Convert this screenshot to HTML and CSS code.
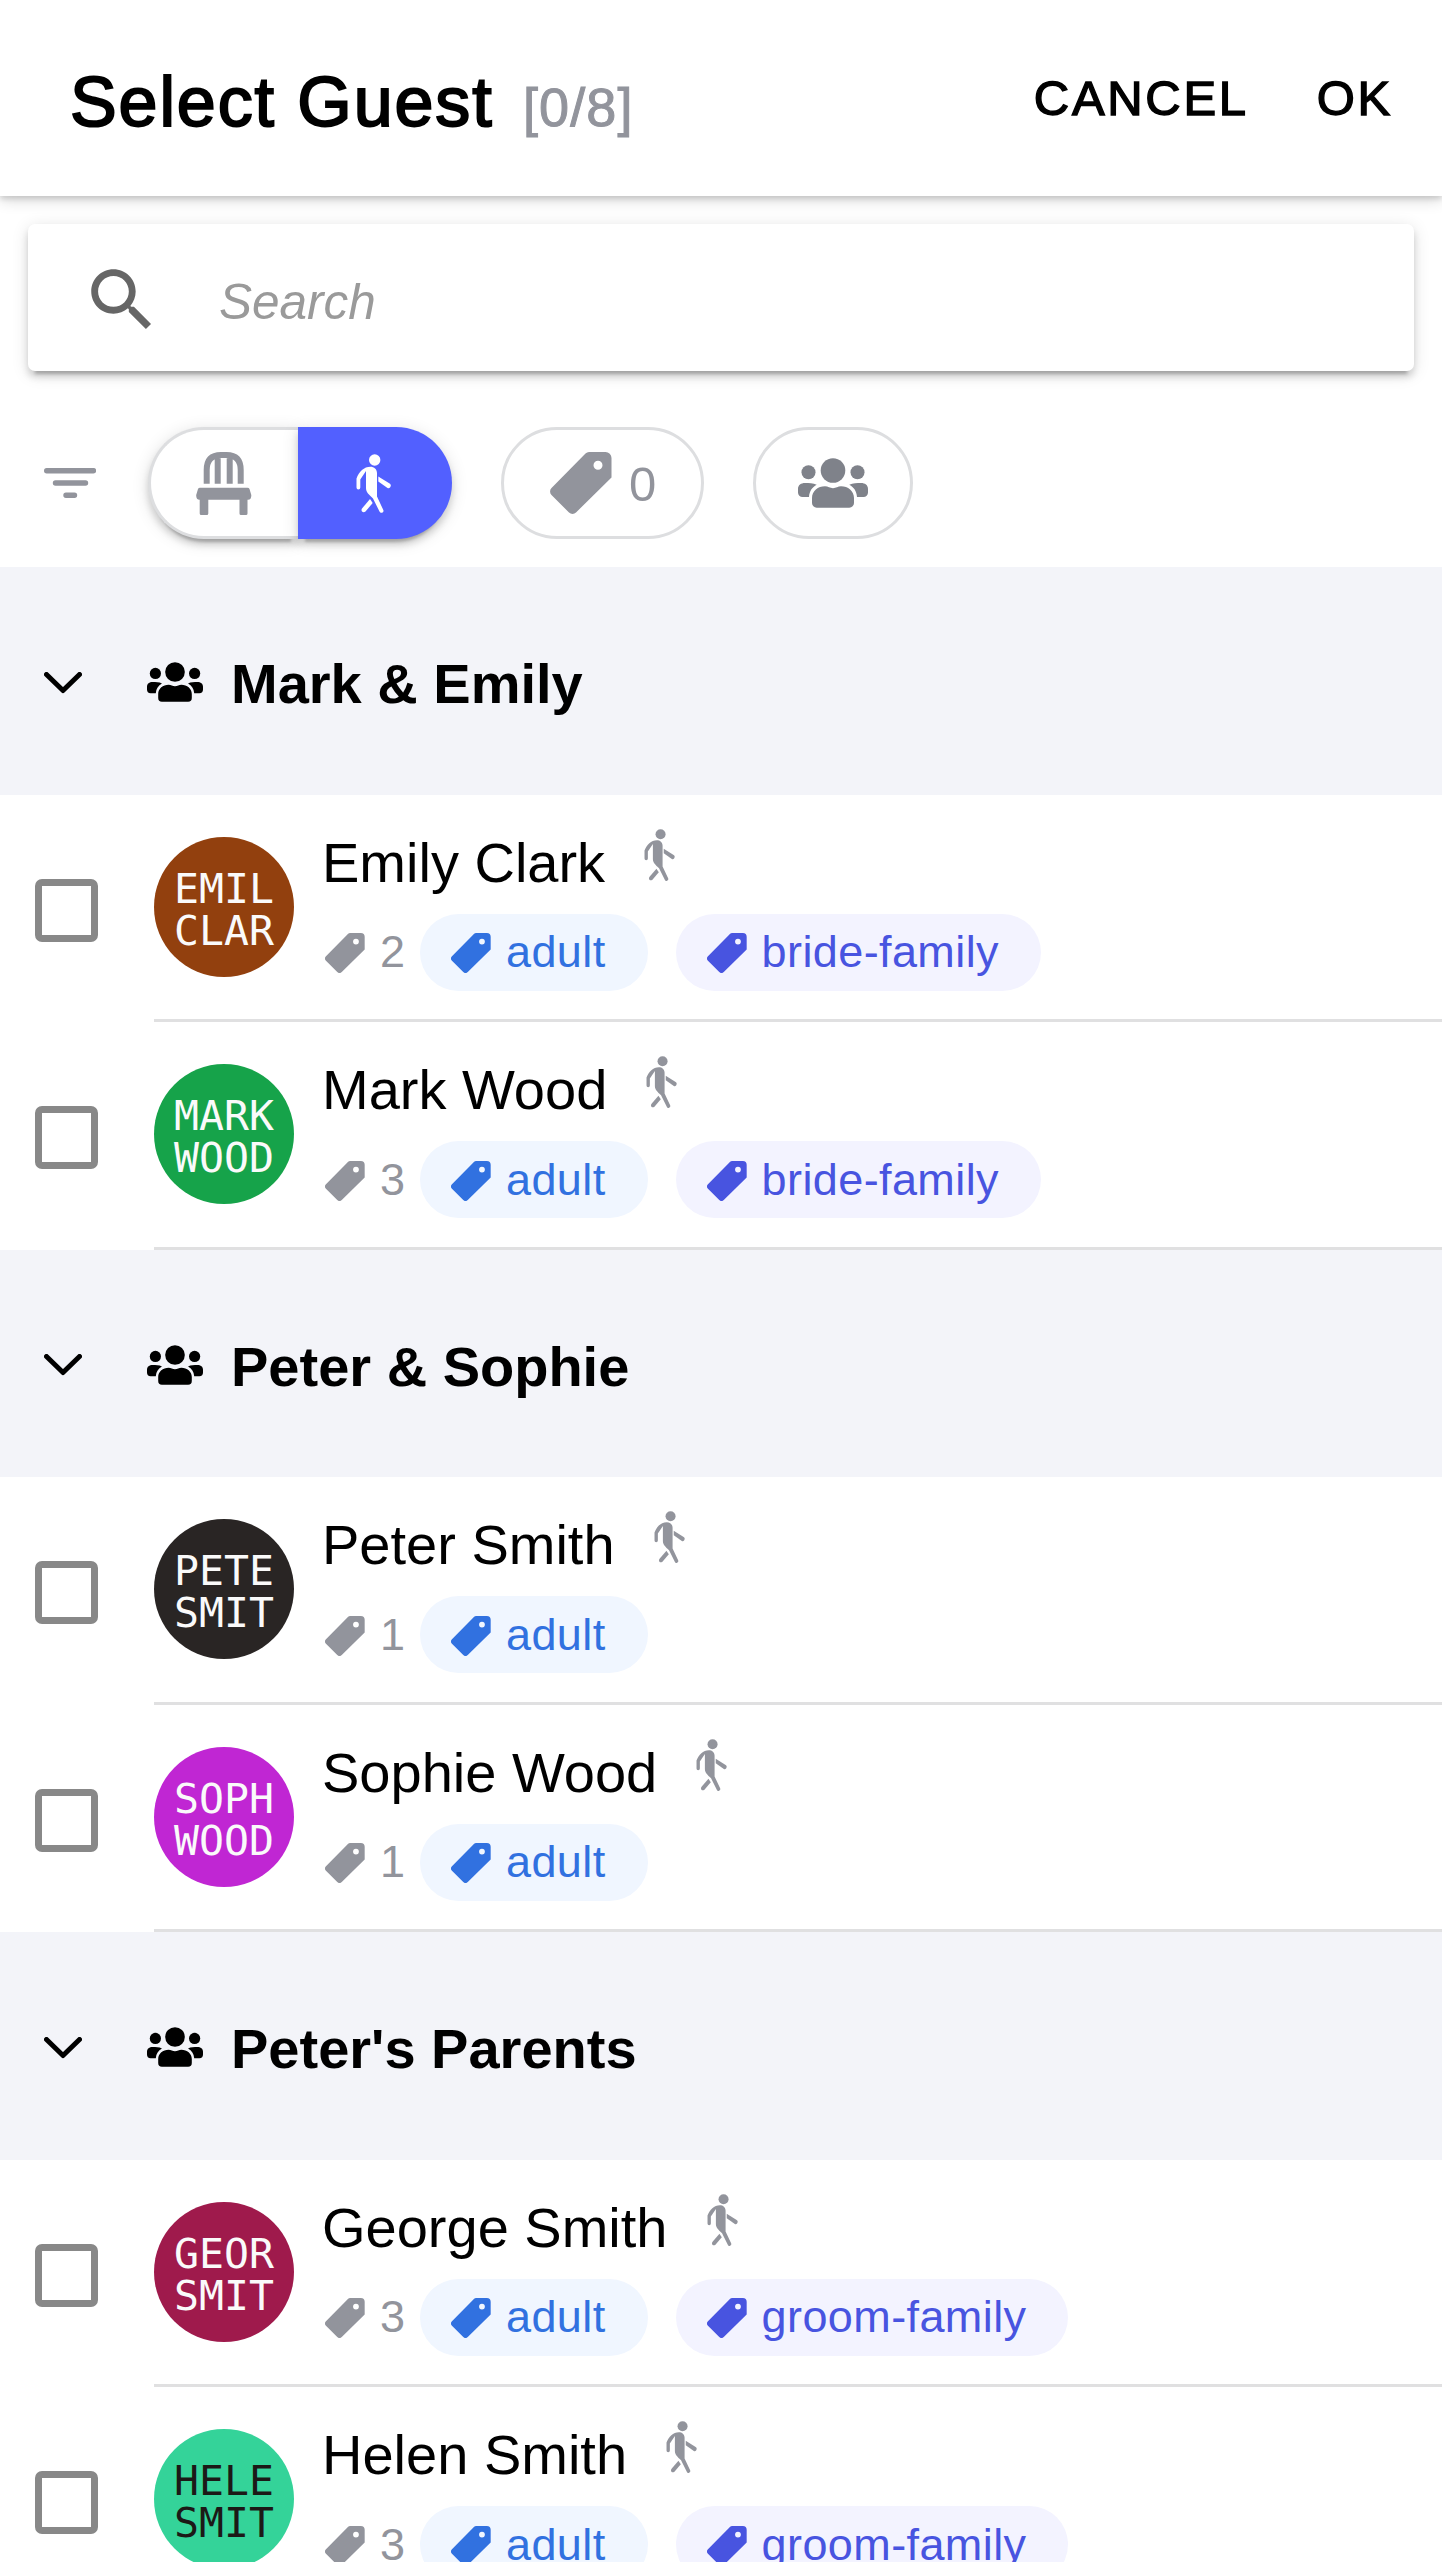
FILE: index.html
```html
<!DOCTYPE html>
<html lang="en">
<head>
    <meta charset="UTF-8">
    <meta name="viewport" content="width=device-width, initial-scale=1.0">
    <title>Select Guest</title>
    <link rel="stylesheet" href="styles.css">
</head>
<body>
    <!-- Shared icons -->
    <svg class="sprite" width="0" height="0">
        <symbol id="walk" viewBox="0 0 35 59">
            <circle cx="18.7" cy="6" r="5.7"/>
            <path d="M10 17V34C10 38.500 13 40.500 17 44.500L23.500 57.500A2 2 0 0 0 27.300 56L21 42.500V19C21 15 18 12.700 14.500 12.700C8 12.700 3 17.500 .5 24.500V33.500A1.900 1.900 0 0 0 4.300 33.500V25.500Z"/>
            <path d="M22.300 22.500L34 29.800Q35.500 31.500 34 33.500Q33 34.700 31.500 34L22.300 27.500Z"/>
            <path d="M14 45L16.700 49L9.500 57.500Q7.500 59 6 57.500Q5 56 6 54.500Z"/>
        </symbol>
        <symbol id="people" viewBox="0 0 70 50">
            <circle cx="35" cy="12.500" r="12.300"/>
            <circle cx="10.500" cy="14.300" r="7"/>
            <circle cx="59.500" cy="14.300" r="7"/>
            <path d="M14 45V40C14 33 20 28.300 27 28.300C30 28.300 32 30.200 35 30.200S40 28.300 43 28.300C50 28.300 56 33 56 40V45A4.700 4.700 0 0 1 51.300 49.700H18.700A4.700 4.700 0 0 1 14 45Z"/>
            <path d="M0 34.500V31C0 27 3 25 7 25C11 25 15 25 18.700 26.800C14 29.500 11.500 33 11 39H4.500A4.500 4.500 0 0 1 0 34.500Z"/>
            <path d="M70 34.500V31C70 27 67 25 63 25C59 25 55 25 51.300 26.800C56 29.500 58.500 33 59 39H65.500A4.500 4.500 0 0 0 70 34.500Z"/>
        </symbol>
        <symbol id="tag" viewBox="0 0 62 62">
            <path fill-rule="evenodd" d="M39 0H55.500A6 6 0 0 1 61.500 6V25.500L26 60.500A5 5 0 0 1 19 60.500L1.500 43A5 5 0 0 1 1.500 36L35.500 1.500Q37 0 39 0ZM48 8.800A4.500 4.500 0 1 0 48 17.800A4.500 4.500 0 1 0 48 8.800Z"/>
        </symbol>
        <symbol id="chevron" viewBox="0 0 38 22">
            <path d="M2.500 2.500L19 18.500L35.500 2.500" fill="none" stroke="currentColor" stroke-width="5" stroke-linecap="round" stroke-linejoin="round"/>
        </symbol>
    </svg>

    <header class="toolbar">
        <h1>Select Guest</h1>
        <span class="counter">[0/8]</span>
        <div class="actions">
            <span class="cancel">CANCEL</span>
            <span class="ok">OK</span>
        </div>
    </header>

    <div class="searchbar">
        <svg viewBox="0 0 24 24"><path d="M15.5 14h-.79l-.28-.27C15.410 12.590 16 11.110 16 9.500 16 5.910 13.090 3 9.500 3S3 5.910 3 9.500 5.910 16 9.500 16c1.610 0 3.090-.59 4.230-1.570l.27.28v.79l5 4.990L20.490 19l-4.990-5zm-6 0C7.010 14 5 11.990 5 9.500S7.010 5 9.500 5 14 7.010 14 9.500 11.990 14 9.500 14z"/></svg>
        <span>Search</span>
    </div>

    <!-- Filters -->
    <div class="filters">
        <svg class="filter-icon" viewBox="0 0 52 30">
            <path d="M2.700 2.700H49.500M11.500 15H41.500M22 27.200H30.500" fill="none" stroke="currentColor" stroke-width="5.400" stroke-linecap="round"/>
        </svg>
        <div class="segment">
            <div class="seg-chair">
                <svg viewBox="0 0 56 63">
                    <path d="M10.700 31.700V18Q10.700 3 25 3H30.500Q44.700 3 44.700 18V31.700M21.700 3V31.700M33.700 3V31.700" fill="none" stroke="currentColor" stroke-width="6"/>
                    <path d="M4 35.700H51.500Q53 35.700 53.500 37L55.300 43Q55.500 47.700 52 47.700H51.500V61.500Q51.500 63 50 63H45Q43.500 63 43.500 61.500V47.700H12.300V61.500Q12.300 63 10.800 63H5.200Q3.700 63 3.700 61.500V47.700H3.500Q0 47.700 .2 43L2 37Q2.500 35.700 4 35.700Z"/>
                </svg>
            </div>
            <div class="seg-walk"><svg><use href="#walk"/></svg></div>
        </div>
        <div class="pill pill-tag"><svg><use href="#tag"/></svg><span>0</span></div>
        <div class="pill pill-people"><svg><use href="#people"/></svg></div>
    </div>

    <!-- Guest list -->
    <div class="group">
        <svg class="chevron"><use href="#chevron"/></svg>
        <svg class="people"><use href="#people"/></svg>
        <h2>Mark &amp; Emily</h2>
    </div>
    <div class="guest">
        <div class="checkbox"></div>
        <div class="guest-body">
            <div class="avatar brown">EMIL<br>CLAR</div>
            <div class="info">
                <div class="name">Emily Clark <svg><use href="#walk"/></svg></div>
                <div class="tags">
                    <div class="count"><svg><use href="#tag"/></svg>2</div>
                    <div class="chip adult"><svg><use href="#tag"/></svg>adult</div>
                    <div class="chip family"><svg><use href="#tag"/></svg>bride-family</div>
                </div>
            </div>
        </div>
    </div>
    <div class="guest">
        <div class="checkbox"></div>
        <div class="guest-body">
            <div class="avatar green">MARK<br>WOOD</div>
            <div class="info">
                <div class="name">Mark Wood <svg><use href="#walk"/></svg></div>
                <div class="tags">
                    <div class="count"><svg><use href="#tag"/></svg>3</div>
                    <div class="chip adult"><svg><use href="#tag"/></svg>adult</div>
                    <div class="chip family"><svg><use href="#tag"/></svg>bride-family</div>
                </div>
            </div>
        </div>
    </div>

    <div class="group">
        <svg class="chevron"><use href="#chevron"/></svg>
        <svg class="people"><use href="#people"/></svg>
        <h2>Peter &amp; Sophie</h2>
    </div>
    <div class="guest">
        <div class="checkbox"></div>
        <div class="guest-body">
            <div class="avatar black">PETE<br>SMIT</div>
            <div class="info">
                <div class="name">Peter Smith <svg><use href="#walk"/></svg></div>
                <div class="tags">
                    <div class="count"><svg><use href="#tag"/></svg>1</div>
                    <div class="chip adult"><svg><use href="#tag"/></svg>adult</div>
                </div>
            </div>
        </div>
    </div>
    <div class="guest">
        <div class="checkbox"></div>
        <div class="guest-body">
            <div class="avatar fuchsia">SOPH<br>WOOD</div>
            <div class="info">
                <div class="name">Sophie Wood <svg><use href="#walk"/></svg></div>
                <div class="tags">
                    <div class="count"><svg><use href="#tag"/></svg>1</div>
                    <div class="chip adult"><svg><use href="#tag"/></svg>adult</div>
                </div>
            </div>
        </div>
    </div>

    <div class="group">
        <svg class="chevron"><use href="#chevron"/></svg>
        <svg class="people"><use href="#people"/></svg>
        <h2>Peter's Parents</h2>
    </div>
    <div class="guest">
        <div class="checkbox"></div>
        <div class="guest-body">
            <div class="avatar rose">GEOR<br>SMIT</div>
            <div class="info">
                <div class="name">George Smith <svg><use href="#walk"/></svg></div>
                <div class="tags">
                    <div class="count"><svg><use href="#tag"/></svg>3</div>
                    <div class="chip adult"><svg><use href="#tag"/></svg>adult</div>
                    <div class="chip family"><svg><use href="#tag"/></svg>groom-family</div>
                </div>
            </div>
        </div>
    </div>
    <div class="guest">
        <div class="checkbox"></div>
        <div class="guest-body">
            <div class="avatar mint">HELE<br>SMIT</div>
            <div class="info">
                <div class="name">Helen Smith <svg><use href="#walk"/></svg></div>
                <div class="tags">
                    <div class="count"><svg><use href="#tag"/></svg>3</div>
                    <div class="chip adult"><svg><use href="#tag"/></svg>adult</div>
                    <div class="chip family"><svg><use href="#tag"/></svg>groom-family</div>
                </div>
            </div>
        </div>
    </div>
</body>
</html>
```
FILE: styles.css
```css
* {
    margin: 0;
    padding: 0;
    box-sizing: border-box;
}

body {
    font-family: "Liberation Sans", Arial, sans-serif;
    background: #fff;
    color: #000;
    height: 2562px;
    overflow: hidden;
}

svg {
    display: block;
    flex: none;
    fill: currentColor;
}

.sprite {
    position: absolute;
}

/* Toolbar */
.toolbar {
    display: flex;
    align-items: baseline;
    height: 196px;
    padding: 62px 49px 0 70px;
    box-shadow: 0 3px 5px rgba(0, 0, 0, 0.12), 0 4px 14px rgba(0, 0, 0, 0.16);
    white-space: nowrap;
}

.toolbar h1 {
    width: 453px;
    font-size: 70px;
    font-weight: 400;
    line-height: 80px;
    letter-spacing: 1.9px;
    -webkit-text-stroke: 2px #000;
}

.counter {
    font-size: 54px;
    letter-spacing: 1.1px;
    color: #92949c;
    -webkit-text-stroke: 1px #92949c;
}

.actions {
    display: flex;
    align-self: flex-start;
    gap: 68px;
    margin-left: auto;
    margin-top: 8px;
    font-size: 49px;
    line-height: 56px;
    letter-spacing: 2.7px;
    -webkit-text-stroke: 1.4px #000;
}

/* Search */
.searchbar {
    display: flex;
    align-items: center;
    height: 147px;
    margin: 28px 28px 0;
    padding-left: 53px;
    border-radius: 7px;
    background: #fff;
    box-shadow: 0 10px 3px -7px rgba(0, 0, 0, 0.2), 0 6px 7px rgba(0, 0, 0, 0.14), 0 3px 17px rgba(0, 0, 0, 0.12);
}

.searchbar svg {
    width: 82px;
    height: 82px;
    margin-right: 56px;
    margin-top: 4px;
    color: #666;
}

.searchbar span {
    font-size: 49.500px;
    font-style: italic;
    line-height: 60px;
    padding-top: 8px;
    color: #9a9a9a;
}

/* Filters */
.filters {
    display: flex;
    align-items: center;
    height: 196px;
    padding: 28px 0 0 44px;
    color: #92949c;
}

.filter-icon {
    width: 52px;
    height: 30px;
    margin-right: 52px;
}

.segment {
    display: flex;
    width: 304px;
    height: 112px;
    margin-right: 49px;
}

.seg-chair,
.seg-walk {
    display: flex;
    align-items: center;
    justify-content: center;
    height: 112px;
    box-shadow: 0 10px 3px -7px rgba(0, 0, 0, 0.2), 0 6px 7px rgba(0, 0, 0, 0.14), 0 3px 17px rgba(0, 0, 0, 0.12);
}

.seg-chair {
    width: 150px;
    padding-right: 2px;
    border: 3.500px solid #dddee0;
    border-right: none;
    border-radius: 56px 0 0 56px;
    background: #fff;
}

.seg-chair svg {
    width: 56px;
    height: 63px;
}

.seg-walk {
    width: 154px;
    padding-right: 3px;
    border-radius: 0 56px 56px 0;
    background: #5260ff;
    color: #fff;
}

.seg-walk svg {
    width: 35px;
    height: 59px;
}

.pill {
    display: flex;
    align-items: center;
    height: 112px;
    border: 3.500px solid #dddee0;
    border-radius: 56px;
}

.pill-tag {
    width: 203px;
    margin-right: 49px;
    padding-left: 46px;
}

.pill-tag svg {
    width: 62px;
    height: 62px;
    margin-right: 17px;
}

.pill-tag span {
    font-size: 49px;
    line-height: 56px;
    padding-top: 1px;
}

.pill-people {
    width: 160px;
    justify-content: center;
    color: #7f828a;
}

.pill-people svg {
    width: 70px;
    height: 50px;
}

/* Group header */
.group {
    display: flex;
    align-items: center;
    height: 227.500px;
    padding-left: 44px;
    background: #f3f4f9;
}

.group .chevron {
    width: 38px;
    height: 22px;
    margin-right: 65px;
    margin-top: 4px;
}

.group .people {
    width: 56px;
    height: 40px;
    margin-right: 28px;
    margin-top: 3px;
}

.group h2 {
    font-size: 56px;
    line-height: 64px;
    padding-top: 7px;
}

/* Guest row */
.guest {
    display: flex;
    height: 227.500px;
}

.checkbox {
    flex: none;
    width: 63px;
    height: 63px;
    margin: 84px 56px 0 35px;
    border: 7px solid #888;
    border-radius: 7px;
}

.guest-body {
    display: flex;
    flex: 1;
    padding-top: 42px;
    border-bottom: 3.500px solid #e0e0e1;
}

.avatar {
    flex: none;
    width: 140px;
    height: 140px;
    margin-right: 28px;
    padding-top: 31px;
    border-radius: 50%;
    font-family: "DejaVu Sans Mono", monospace;
    font-size: 41.500px;
    line-height: 42px;
    text-align: center;
    color: #fafafa;
}

.brown { background: #92400e; }
.green { background: #16a34a; }
.black { background: #292524; }
.fuchsia { background: #c026d3; }
.rose { background: #9f1a4c; }
.mint { background: #34d399; color: #1c1917; }

.name {
    display: flex;
    height: 77px;
    font-size: 56px;
    line-height: 52px;
    white-space: nowrap;
}

.name svg {
    width: 31px;
    height: 52px;
    margin-left: 39px;
    margin-top: -8px;
    color: #92949c;
}

.tags {
    display: flex;
    align-items: center;
    height: 77px;
    font-size: 45px;
    line-height: 50px;
    letter-spacing: 0.4px;
    color: #92949c;
}

.tags svg {
    width: 40px;
    height: 40px;
    margin-top: 2px;
}

.count {
    display: flex;
    align-items: center;
    width: 95px;
    margin-left: 3px;
    gap: 15px;
}

.chip {
    display: flex;
    align-items: center;
    gap: 15px;
    height: 77px;
    margin-right: 28px;
    padding: 0 42px 0 31px;
    border-radius: 39px;
}

.adult {
    background: #f0f6ff;
    color: #3171e0;
}

.family {
    background: #f3f3ff;
    color: #4854e0;
}
```
